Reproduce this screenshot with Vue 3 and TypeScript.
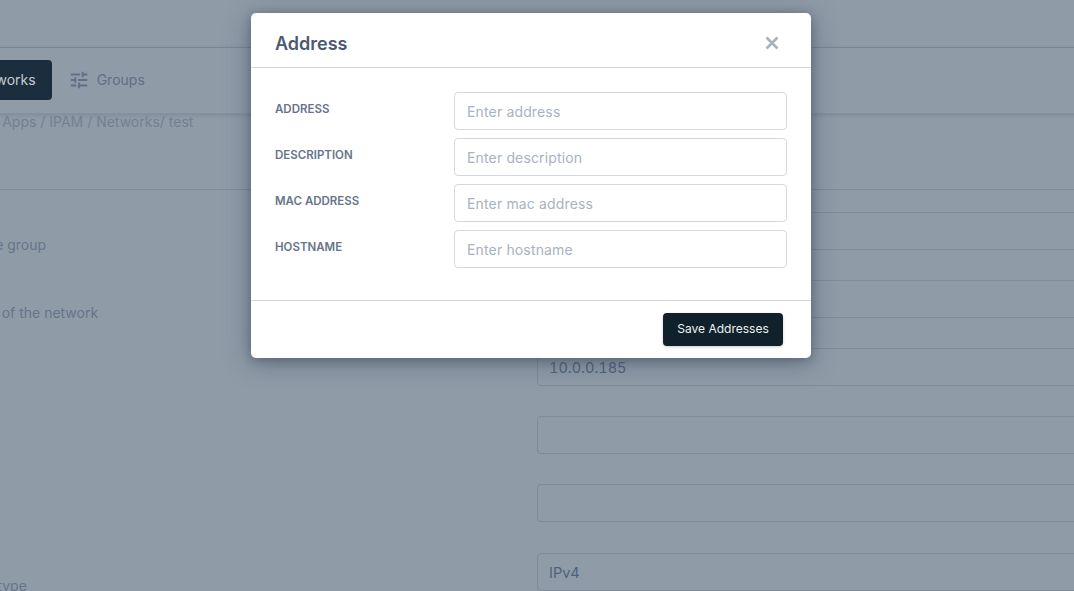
<template>
  <div class="screen">
    <div class="page">
      <header class="topbar"></header>
      <nav class="tabs">
        <a class="tab active">
          <svg class="tab-icon" viewBox="0 0 24 24" width="22" height="22"><path :d="tunePath" /></svg>
          <span>Networks</span>
        </a>
        <a class="tab">
          <svg class="tab-icon" viewBox="0 0 24 24" width="22" height="22"><path :d="tunePath" /></svg>
          <span>Groups</span>
        </a>
      </nav>
      <div class="crumbs">Home / Apps / IPAM / Networks/ test</div>
      <form class="form">
        <div v-for="row in rows" :key="row.label" class="row">
          <label>{{ row.label }}</label>
          <div class="fake-input">{{ row.value }}</div>
        </div>
      </form>
    </div>

    <div class="modal-wrap">
      <section class="modal">
        <header class="modal-head">
          <h2>Address</h2>
          <svg class="close" viewBox="0 0 14 14" width="14" height="14">
            <path d="M1.5 1.5l11 11M12.5 1.5l-11 11" />
          </svg>
        </header>
        <div class="modal-body">
          <div v-for="field in fields" :key="field.label" class="field">
            <label>{{ field.label }}</label>
            <input type="text" :placeholder="field.placeholder" />
          </div>
        </div>
        <footer class="modal-foot">
          <button type="button">Save Addresses</button>
        </footer>
      </section>
    </div>
  </div>
</template>

<script setup lang="ts">
const tunePath =
  'M3 17v2h6v-2H3zM3 5v2h10V5H3zm10 16v-2h8v-2h-8v-2h-2v6h2zM7 9v2H3v2h4v2h2V9H7zm14 4v-2H11v2h10zm-6-4h2V7h4V5h-4V3h-2v6z';

const rows = [
  { label: 'Name of the group', value: '' },
  { label: 'Description of the network', value: '' },
  { label: 'Gateway', value: '10.0.0.185' },
  { label: 'Broadcast', value: '' },
  { label: 'Netmask', value: '' },
  { label: 'IP Address type', value: 'IPv4' },
];

const fields = [
  { label: 'Address', placeholder: 'Enter address' },
  { label: 'Description', placeholder: 'Enter description' },
  { label: 'Mac address', placeholder: 'Enter mac address' },
  { label: 'Hostname', placeholder: 'Enter hostname' },
];
</script>

<style>
html,
body {
  margin: 0;
  background: #8f9ba7;
}
</style>

<style scoped>
.screen {
  position: relative;
  width: 1074px;
  height: 591px;
  overflow: hidden;
  background: #8f9ba7;
  font-family: Inter, 'Liberation Sans', sans-serif;
}

.page {
  width: 1500px;
  margin-left: -104px;
}

.topbar {
  height: 47px;
  border-bottom: 1px solid #7d8998;
}

.tabs {
  display: flex;
  align-items: center;
  height: 64px;
  padding: 0 0 1px 30px;
  border-bottom: 1px solid #85919e;
  box-shadow: 0 1px 4px rgba(90, 105, 120, 0.35);
}

.tab {
  display: flex;
  align-items: center;
  gap: 7px;
  height: 40px;
  padding: 0 16px;
  border-radius: 4px;
  font-size: 14px;
  color: #5f6f84;
}

.tab span {
  margin-bottom: 2px;
}

.tab.active {
  gap: 8px;
  background: #1a2e3d;
  color: #c5ccd3;
}

.tab-icon {
  fill: currentColor;
}

.crumbs {
  height: 75px;
  padding-left: 54px;
  font-size: 14px;
  line-height: 16px;
  color: #73818f;
  border-bottom: 1px solid #7f8b99;
}

.form {
  padding: 22px 0 0 26px;
}

.row {
  display: flex;
  height: 68px;
}

.row:last-child {
  margin-top: 1px;
}

.row label {
  flex: none;
  width: 615px;
  padding-top: 23px;
  font-size: 14px;
  line-height: 20px;
  color: #66758a;
}

.fake-input {
  flex: none;
  box-sizing: border-box;
  width: 800px;
  height: 38px;
  padding: 0 11px;
  border: 1px solid #7f8b9a;
  border-radius: 4px;
  font-size: 14.5px;
  font-variant-numeric: tabular-nums;
  line-height: 38px;
  color: #4f627c;
}

.modal-wrap {
  position: absolute;
  inset: 0;
  display: flex;
  justify-content: center;
  align-items: flex-start;
  padding: 13px 12px 0 0;
}

.modal {
  width: 560px;
  background: #fff;
  border-radius: 5px;
  box-shadow: 0 4px 24px rgba(55, 70, 90, 0.55), 0 2px 8px rgba(55, 70, 90, 0.35);
}

.modal-head {
  display: flex;
  align-items: center;
  justify-content: space-between;
  box-sizing: border-box;
  height: 55px;
  padding: 6px 32px 0 24px;
  border-bottom: 1px solid #d5d8de;
}

.modal-head h2 {
  margin: 0;
  font-size: 18px;
  font-weight: 600;
  color: #4a5a70;
}

.close {
  fill: none;
  stroke: #a9b2bf;
  stroke-width: 2.6;
}

.modal-body {
  display: flex;
  flex-direction: column;
  gap: 8px;
  padding: 24px 24px 32px;
}

.field {
  display: flex;
  align-items: flex-start;
}

.field label {
  width: 179px;
  padding-top: 10px;
  font-size: 11.5px;
  font-weight: 600;
  line-height: 15px;
  text-transform: uppercase;
  color: #66758a;
}

.field input {
  box-sizing: border-box;
  flex: 1;
  height: 38px;
  padding: 0 12px;
  border: 1px solid #d5d8de;
  border-radius: 4px;
  outline: none;
  font-family: inherit;
  font-size: 14px;
  letter-spacing: 0.15px;
  color: #4a5a70;
}

.field input::placeholder {
  color: #a9b2bf;
  opacity: 1;
}

.modal-foot {
  display: flex;
  justify-content: flex-end;
  box-sizing: border-box;
  height: 58px;
  padding: 12px 28px 0 0;
  border-top: 1px solid #d5d8de;
}

.modal-foot button {
  width: 120px;
  height: 33px;
  padding-bottom: 3px;
  border: none;
  border-radius: 4px;
  background: #10212b;
  box-shadow: 0 1px 3px rgba(0, 0, 0, 0.2);
  font-family: inherit;
  font-size: 12px;
  color: #eef1f3;
}
</style>
